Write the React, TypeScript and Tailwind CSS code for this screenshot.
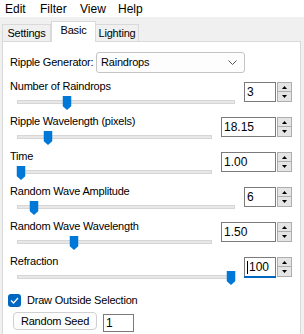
import React from 'react'

const rows = [
  { label: 'Number of Raindrops', value: '3', pos: 0.22, wide: false },
  { label: 'Ripple Wavelength (pixels)', value: '18.15', pos: 0.145, wide: true },
  { label: 'Time', value: '1.00', pos: 0, wide: true },
  { label: 'Random Wave Amplitude', value: '6', pos: 0.062, wide: false },
  { label: 'Random Wave Wavelength', value: '1.50', pos: 0.285, wide: true },
  { label: 'Refraction', value: '100', pos: 1, wide: false, focused: true },
]

function Thumb() {
  return (
    <svg width="9" height="14" viewBox="0 0 9 14" className="block">
      <path d="M0 0 H9 V10 L4.5 14 L0 10 Z" fill="#0078d7" />
    </svg>
  )
}

function Slider({ pos }: { pos: number }) {
  return (
    <div className="relative h-[18px] mr-[9px]">
      <div className="absolute left-0 right-0 top-[6px] h-[4px] bg-[#e7e7e7] border border-[#d6d6d6]" />
      <div className="absolute left-[4px] right-[4px] top-[2px]">
        <div className="absolute -translate-x-1/2" style={{ left: `${pos * 100}%` }}>
          <Thumb />
        </div>
      </div>
    </div>
  )
}

function Spin() {
  return (
    <div className="ml-px flex flex-col w-[15px] h-[20px]">
      <div className="h-[10px] border border-[#adadad] bg-[#e5e5e5] flex items-center justify-center">
        <svg width="5" height="3" viewBox="0 0 5 3"><path d="M2.5 0 L5 3 H0 Z" fill="#000" /></svg>
      </div>
      <div className="h-[10px] border border-t-0 border-[#adadad] bg-[#e5e5e5] flex items-center justify-center">
        <svg width="5" height="3" viewBox="0 0 5 3"><path d="M0 0 H5 L2.5 3 Z" fill="#000" /></svg>
      </div>
    </div>
  )
}

export default function App() {
  return (
    <div className="w-[304px] h-[334px] overflow-hidden bg-[#f0f0f0] text-[11px] tracking-[-0.2px] text-black font-['Liberation_Sans',sans-serif]">
      <div className="h-[17px] bg-white flex items-center pl-[5px] leading-none text-[12px] tracking-normal">
        <span className="w-[35px]">Edit</span>
        <span className="w-[40px]">Filter</span>
        <span className="w-[38px]">View</span>
        <span>Help</span>
      </div>

      <div className="flex items-end h-[24px] pl-[2px]">
        <div className="h-[17px] w-[49px] border border-b-0 border-[#d9d9d9] flex items-center justify-center pt-px">Settings</div>
        <div className="relative z-10 -mb-px h-[21px] w-[45px] bg-white border border-b-0 border-[#d9d9d9] flex items-center justify-center pb-[3px]">Basic</div>
        <div className="h-[17px] w-[43px] border border-l-0 border-b-0 border-[#d9d9d9] flex items-center justify-center pt-px">Lighting</div>
      </div>

      <div className="ml-[2px] w-[299px] h-[300px] bg-white border border-[#d9d9d9] pl-[7px] pr-[8px]">
        <div className="mt-[10px] flex items-center h-[21px]">
          <span className="w-[86px] whitespace-nowrap">Ripple Generator:</span>
          <div className="w-[149px] h-[21px] rounded-[3px] border border-[#c4c4c4] bg-[#fdfdfd] flex items-center justify-between pl-[4px] pr-[7px]">
            <span>Raindrops</span>
            <svg width="9" height="5" viewBox="0 0 9 5"><path d="M0.5 0.5 L4.5 4.5 L8.5 0.5" stroke="#555" fill="none" /></svg>
          </div>
        </div>

        <div className="mt-[6px] flex flex-col">
          {rows.map((r) => (
            <div key={r.label} className="h-[35px] flex items-start">
              <div className="flex-1 flex flex-col">
                <div className="h-[15px] leading-[15px] whitespace-nowrap">{r.label}</div>
                <div className="pl-[7px]">
                  <Slider pos={r.pos} />
                </div>
              </div>
              <div className="mt-[3px] flex items-start">
                <div className="relative">
                  <div className={`${r.wide ? 'w-[55px]' : 'w-[32px]'} h-[20px] border border-[#7a7a7a] bg-white pl-[2px] leading-[18px] flex items-center text-[12px] tracking-normal`}>
                    {r.focused && <span className="w-px h-[13px] bg-black mr-px" />}
                    {r.value}
                  </div>
                  {r.focused && <div className="absolute left-0 right-0 -bottom-[1px] h-[2px] bg-[#0067c0]" />}
                </div>
                <Spin />
              </div>
            </div>
          ))}
        </div>

        <div className="mt-[4px] -ml-[2px] flex items-center gap-[6px] h-[14px]">
          <div className="w-[13px] h-[13px] rounded-[3px] bg-[#0067c0] flex items-center justify-center">
            <svg width="9" height="7" viewBox="0 0 9 7"><path d="M1 3.5 L3.5 6 L8 1" stroke="#fff" strokeWidth="1.3" fill="none" /></svg>
          </div>
          <span>Draw Outside Selection</span>
        </div>

        <div className="mt-[5px] flex items-start pl-[3px] gap-[6px]">
          <div className="w-[84px] h-[18px] rounded-[4px] border border-[#d0d0d0] bg-[#fdfdfd] flex items-center justify-center">Random Seed</div>
          <div className="mt-[2px] w-[31px] h-[18px] border border-[#7a7a7a] pl-[2px] leading-[16px] text-[12px]">1</div>
        </div>
      </div>
    </div>
  )
}
